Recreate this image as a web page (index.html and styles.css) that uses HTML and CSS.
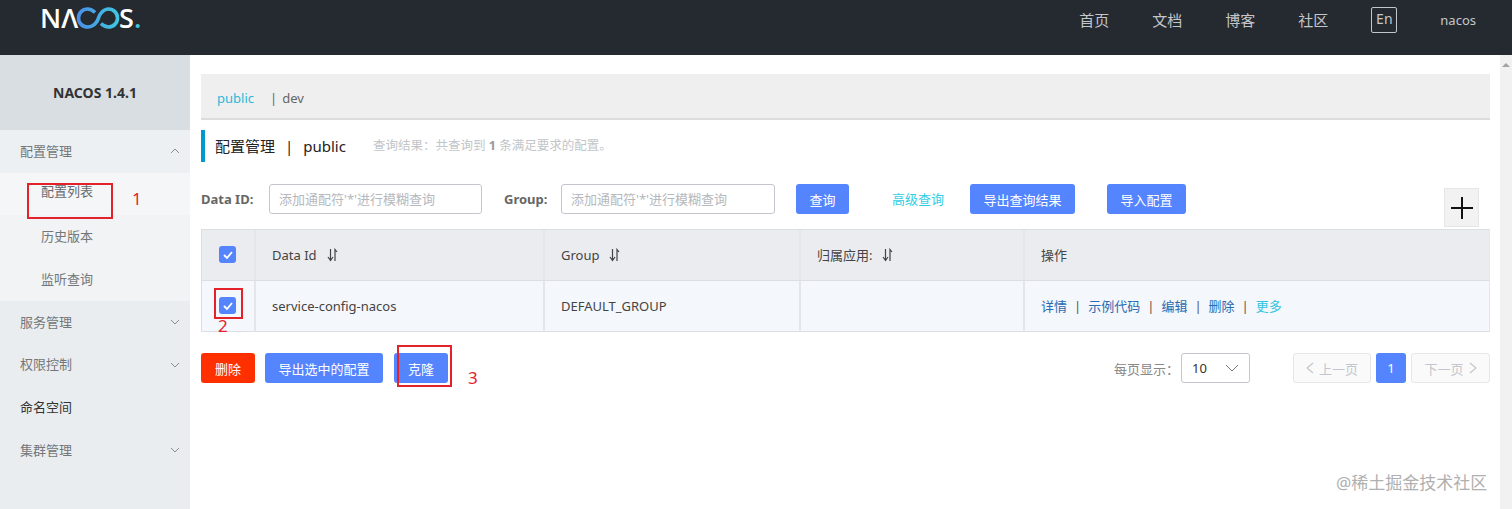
FILE: index.html
```html
<!DOCTYPE html>
<html lang="zh-CN">
<head>
    <meta charset="UTF-8">
    <meta name="viewport" content="width=device-width, initial-scale=1.0">
    <title>Nacos 配置管理</title>
    <link rel="stylesheet" href="styles.css">
</head>
<body>
    <header class="topbar">
        <div class="logo">
            <span>N&Lambda;</span>
            <svg class="logo-loop" width="44" height="22" viewBox="0 0 44 22" fill="none">
                <defs>
                    <linearGradient id="loopGrad" x1="0" y1="0" x2="1" y2="0">
                        <stop offset="0" stop-color="#4a90e8"/>
                        <stop offset="1" stop-color="#3fc6e0"/>
                    </linearGradient>
                </defs>
                <path d="M19 5.5C16.5 3 14 2 11.500 2 6.500 2 2.500 6 2.500 11s4 9 9 9c6 0 10-5 11-9s5-9 10-9 9 4 9 9-4 9-9 9c-2.500 0-5-1-7.500-3.500" stroke="url(#loopGrad)" stroke-width="3.600"/>
            </svg>
            <span>S</span><span class="logo-dot">.</span>
        </div>
        <nav class="topnav">
            <a>首页</a>
            <a>文档</a>
            <a>博客</a>
            <a>社区</a>
            <a class="lang">En</a>
            <a class="user">nacos</a>
        </nav>
    </header>

    <div class="layout">
        <aside class="sidebar">
            <div class="side-title">NACOS 1.4.1</div>
            <div class="side-item open">配置管理
                <svg class="chev" width="10" height="6" viewBox="0 0 10 6"><path d="M1 5l4-4 4 4"/></svg>
            </div>
            <div class="side-sub active">配置列表</div>
            <div class="side-sub">历史版本</div>
            <div class="side-sub">监听查询</div>
            <div class="side-item">服务管理
                <svg class="chev" width="10" height="6" viewBox="0 0 10 6"><path d="M1 1l4 4 4-4"/></svg>
            </div>
            <div class="side-item">权限控制
                <svg class="chev" width="10" height="6" viewBox="0 0 10 6"><path d="M1 1l4 4 4-4"/></svg>
            </div>
            <div class="side-item dark">命名空间</div>
            <div class="side-item">集群管理
                <svg class="chev" width="10" height="6" viewBox="0 0 10 6"><path d="M1 1l4 4 4-4"/></svg>
            </div>
        </aside>

        <main class="content">
            <div class="ns-bar">
                <span class="ns-on">public</span>
                <span class="ns-sep">|</span>
                <span class="ns-off">dev</span>
            </div>

            <div class="page-title">
                <span class="page-name">配置管理</span>
                <span class="page-sep">|</span>
                <span class="page-ns">public</span>
                <span class="page-note">查询结果：共查询到 <b>1</b> 条满足要求的配置。</span>
            </div>

            <div class="filters">
                <label class="f-label f-label-id">Data ID:</label>
                <div class="f-input f-input-id">添加通配符'*'进行模糊查询</div>
                <label class="f-label f-label-group">Group:</label>
                <div class="f-input f-input-group">添加通配符'*'进行模糊查询</div>
                <button class="btn btn-query">查询</button>
                <a class="adv-link">高级查询</a>
                <button class="btn btn-export">导出查询结果</button>
                <button class="btn btn-import">导入配置</button>
                <div class="add-box">
                    <svg width="22" height="22" viewBox="0 0 22 22"><path d="M0 11h22M11 0v22" stroke="#111" stroke-width="2"/></svg>
                </div>
            </div>

            <div class="table">
                <div class="row head">
                    <div class="cell c-check"><span class="check"><svg width="10" height="8" viewBox="0 0 10 8" fill="none"><path d="M1 4l3 3 5-6" stroke="#fff" stroke-width="1.800"/></svg></span></div>
                    <div class="cell c-id">Data Id
                        <svg class="sort" width="11" height="14" viewBox="0 0 11 14" fill="none"><path d="M1 9l2.500 3.500L6 9M3.500 1v11M8 13V1.500l2 2.500" stroke="#444" stroke-width="1.200"/></svg>
                    </div>
                    <div class="cell c-group">Group
                        <svg class="sort" width="11" height="14" viewBox="0 0 11 14" fill="none"><path d="M1 9l2.500 3.500L6 9M3.500 1v11M8 13V1.500l2 2.500" stroke="#444" stroke-width="1.200"/></svg>
                    </div>
                    <div class="cell c-app">归属应用:
                        <svg class="sort" width="11" height="14" viewBox="0 0 11 14" fill="none"><path d="M1 9l2.500 3.500L6 9M3.500 1v11M8 13V1.500l2 2.500" stroke="#444" stroke-width="1.200"/></svg>
                    </div>
                    <div class="cell c-ops">操作</div>
                </div>
                <div class="row body">
                    <div class="cell c-check"><span class="check"><svg width="10" height="8" viewBox="0 0 10 8" fill="none"><path d="M1 4l3 3 5-6" stroke="#fff" stroke-width="1.800"/></svg></span></div>
                    <div class="cell c-id">service-config-nacos</div>
                    <div class="cell c-group">DEFAULT_GROUP</div>
                    <div class="cell c-app"></div>
                    <div class="cell c-ops ops">
                        <a>详情</a><i>|</i><a>示例代码</a><i>|</i><a>编辑</a><i>|</i><a>删除</a><i>|</i><a class="more">更多</a>
                    </div>
                </div>
            </div>

            <div class="footer-row">
                <button class="btn btn-danger">删除</button>
                <button class="btn btn-selected">导出选中的配置</button>
                <button class="btn btn-clone">克隆</button>
                <div class="pager">
                    <span class="page-size-label">每页显示：</span>
                    <div class="page-size">10
                        <svg width="14" height="8" viewBox="0 0 14 8" fill="none"><path d="M1 1l6 6 6-6" stroke="#777" stroke-width="1"/></svg>
                    </div>
                    <div class="page-btn prev">
                        <svg width="8" height="12" viewBox="0 0 8 12" fill="none"><path d="M7 1L1 6l6 5" stroke="#c4c6cf" stroke-width="1.200"/></svg>
                        上一页
                    </div>
                    <div class="page-num">1</div>
                    <div class="page-btn next">下一页
                        <svg width="8" height="12" viewBox="0 0 8 12" fill="none"><path d="M1 1l6 5-6 5" stroke="#c4c6cf" stroke-width="1.200"/></svg>
                    </div>
                </div>
            </div>
        </main>

        <div class="scrollbar">
            <span class="scroll-up"></span>
        </div>
    </div>

    <div class="mark mark-1"></div>
    <div class="mark-num num-1">1</div>
    <div class="mark mark-2"></div>
    <div class="mark-num num-2">2</div>
    <div class="mark mark-3"></div>
    <div class="mark-num num-3">3</div>
    <div class="watermark">@稀土掘金技术社区</div>
</body>
</html>
```

FILE: styles.css
```css
* {
    box-sizing: border-box;
}
html, body {
    height: 509px;
    overflow: hidden;
}
body {
    margin: 0;
    position: relative;
    background: #fff;
    color: #333;
    font-family: "Noto Sans", "Noto Sans CJK SC", sans-serif;
    font-size: 13px;
}

/* top bar */
.topbar {
    height: 55px;
    background: #252a31;
    display: flex;
    justify-content: space-between;
}
.logo {
    display: flex;
    align-items: center;
    height: 36px;
    padding-left: 40px;
    color: #fff;
    font-family: "Open Sans", sans-serif;
    font-size: 27px;
    font-weight: 600;
    line-height: 36px;
}
.logo-loop {
    margin: 0 -1px 0 -2px;
}
.logo-dot {
    color: #3fc6e0;
}
.topnav {
    display: flex;
    align-items: flex-start;
    color: #c4c6c9;
    font-size: 15px;
    line-height: 40px;
}
.topnav a {
    margin-right: 43px;
}
.topnav .lang {
    margin: 7px 43px 0 0;
    width: 26px;
    height: 26px;
    border: 1px solid #c4c6c9;
    border-radius: 2px;
    line-height: 22px;
    text-align: center;
    font-size: 14px;
}
.topnav .user {
    margin-right: 36px;
    font-size: 13px;
}

/* main layout */
.layout {
    display: flex;
    height: 454px;
}
.sidebar {
    width: 190px;
    background: #e9edf0;
    color: #73777a;
    flex: none;
}
.side-title {
    height: 75px;
    background: #d9dee2;
    color: #333;
    font-weight: 700;
    font-size: 14px;
    line-height: 75px;
    text-align: center;
}
.side-item, .side-sub {
    height: 42.670px;
    line-height: 42.670px;
    display: flex;
    justify-content: space-between;
    align-items: center;
}
.side-item {
    padding: 0 10px 0 20px;
}
.side-sub {
    padding-left: 41px;
    background: #f1f3f5;
}
.side-item.open {
    background: #edf0f2;
}
.side-sub.active {
    background: #f5f6f8;
    color: #66696c;
    line-height: 36px;
    align-items: flex-start;
}
.side-item.dark {
    color: #333;
}
.chev path {
    fill: none;
    stroke: #8a8e91;
}
.content {
    flex: 1;
    padding: 19px 10px 0 11px;
    min-width: 0;
}
.scrollbar {
    width: 12px;
    background: #f1f1f1;
    flex: none;
    padding: 8px 2px;
}
.scroll-up {
    display: block;
    width: 0;
    border-left: 4px solid transparent;
    border-right: 4px solid transparent;
    border-bottom: 4px solid #a3a3a3;
}

/* namespace bar */
.ns-bar {
    height: 46px;
    background: #efefef;
    border-bottom: 2px solid #dcdcdc;
    padding-left: 16px;
    line-height: 49px;
    display: flex;
}
.ns-on {
    color: #2cb8d8;
}
.ns-sep {
    margin-left: 16px;
    color: #666;
}
.ns-off {
    margin-left: 5px;
    color: #666;
}

/* title */
.page-title {
    height: 32px;
    margin-top: 10px;
    border-left: 4px solid #09c;
    padding-left: 10px;
    display: flex;
    align-items: center;
    font-size: 15px;
    line-height: 32px;
    color: #222;
}
.page-sep {
    margin: 0 10px;
}
.page-note {
    margin-left: 27px;
    font-size: 12.500px;
    color: #c1c5c8;
}
.page-note b {
    color: #999;
}

/* filters */
.filters {
    display: flex;
    align-items: flex-start;
    height: 30px;
    margin-top: 22px;
}
.f-label {
    width: 68px;
    line-height: 30px;
    font-weight: 700;
    color: #666;
    flex: none;
}
.f-label-group {
    width: 57px;
    margin-left: 22px;
}
.f-input {
    height: 30px;
    border: 1px solid #c4c6cf;
    border-radius: 3px;
    padding-left: 9px;
    line-height: 28px;
    color: #b5b8bd;
    flex: none;
}
.f-input-id {
    width: 213px;
}
.f-input-group {
    width: 214px;
}
.btn {
    height: 30px;
    border: none;
    border-radius: 3px;
    background: #5584ff;
    color: #fff;
    font: inherit;
    padding: 0;
    flex: none;
}
.btn-query {
    width: 53px;
    margin-left: 21px;
}
.adv-link {
    margin-left: 43px;
    line-height: 30px;
    color: #33cde5;
}
.btn-export {
    width: 105px;
    margin-left: 26px;
}
.btn-import {
    width: 79px;
    margin-left: 32px;
}
.add-box {
    width: 35px;
    height: 39px;
    margin: 4px 11px 0 auto;
    background: #f2f2f2;
    border: 1px solid #e6e6e6;
    display: flex;
    align-items: center;
    justify-content: center;
    flex: none;
}

/* table */
.table {
    margin-top: 15px;
    border: 1px solid #dcdee3;
    border-right-color: #e6e7eb;
}
.row {
    display: flex;
    height: 50.500px;
}
.row.head {
    background: #ebecf0;
    border-bottom: 1px solid #dcdee3;
    color: #444;
}
.row.body {
    background: #f4f7fb;
    color: #444;
}
.cell {
    display: flex;
    align-items: center;
    padding-left: 16px;
    border-right: 2px solid #e4e6ea;
}
.c-check {
    width: 54px;
    padding-left: 17px;
}
.c-id {
    width: 289px;
}
.c-group {
    width: 256px;
}
.c-app {
    width: 224px;
}
.c-ops {
    flex: 1;
    border-right: none;
}
.check {
    width: 17px;
    height: 17px;
    border-radius: 3px;
    background: #5584ff;
    display: flex;
    align-items: center;
    justify-content: center;
}
.sort {
    margin-left: 10px;
}
.ops a {
    color: #2a6ab0;
}
.ops a.more {
    color: #33c4e0;
}
.ops i {
    font-style: normal;
    margin: 0 7px;
    color: #555;
}

/* footer row */
.footer-row {
    display: flex;
    align-items: center;
    margin-top: 21px;
}
.btn-danger {
    width: 54px;
    background: #ff3000;
}
.btn-selected {
    width: 118px;
    margin-left: 10px;
}
.btn-clone {
    width: 54px;
    margin-left: 11px;
}
.pager {
    margin-left: auto;
    display: flex;
    align-items: center;
    height: 30px;
}
.page-size-label {
    color: #888;
}
.page-size {
    width: 69px;
    height: 30px;
    margin: 0 0 0 2px;
    border: 1px solid #c4c6cf;
    border-radius: 3px;
    padding: 0 10px;
    display: flex;
    align-items: center;
    justify-content: space-between;
    color: #333;
}
.page-btn {
    height: 30px;
    border: 1px solid #e6e7eb;
    border-radius: 3px;
    background: #fafafa;
    color: #c4c6cf;
    display: flex;
    align-items: center;
    justify-content: center;
    gap: 5px;
}
.prev {
    width: 78px;
    margin-left: 43px;
}
.next {
    width: 79px;
}
.page-num {
    width: 30px;
    height: 30px;
    margin: 0 5px;
    border-radius: 3px;
    background: #5584ff;
    color: #fff;
    line-height: 30px;
    text-align: center;
}

/* red annotations over the page */
.mark {
    position: absolute;
    border: 2px solid #e3222b;
}
.mark-1 {
    left: 27px;
    top: 183px;
    width: 86px;
    height: 36px;
}
.mark-2 {
    left: 214px;
    top: 288px;
    width: 29px;
    height: 31px;
}
.mark-3 {
    left: 397px;
    top: 345px;
    width: 55px;
    height: 42px;
}
.mark-num {
    position: absolute;
    color: #e3222b;
    font-size: 17px;
    line-height: 20px;
}
.num-1 {
    left: 132px;
    top: 189px;
}
.num-2 {
    left: 218px;
    top: 316px;
}
.num-3 {
    left: 468px;
    top: 368px;
}
.watermark {
    position: absolute;
    left: 1336px;
    top: 471px;
    color: #b0b0b0;
    font-size: 17px;
    line-height: 24px;
    white-space: nowrap;
}
```
